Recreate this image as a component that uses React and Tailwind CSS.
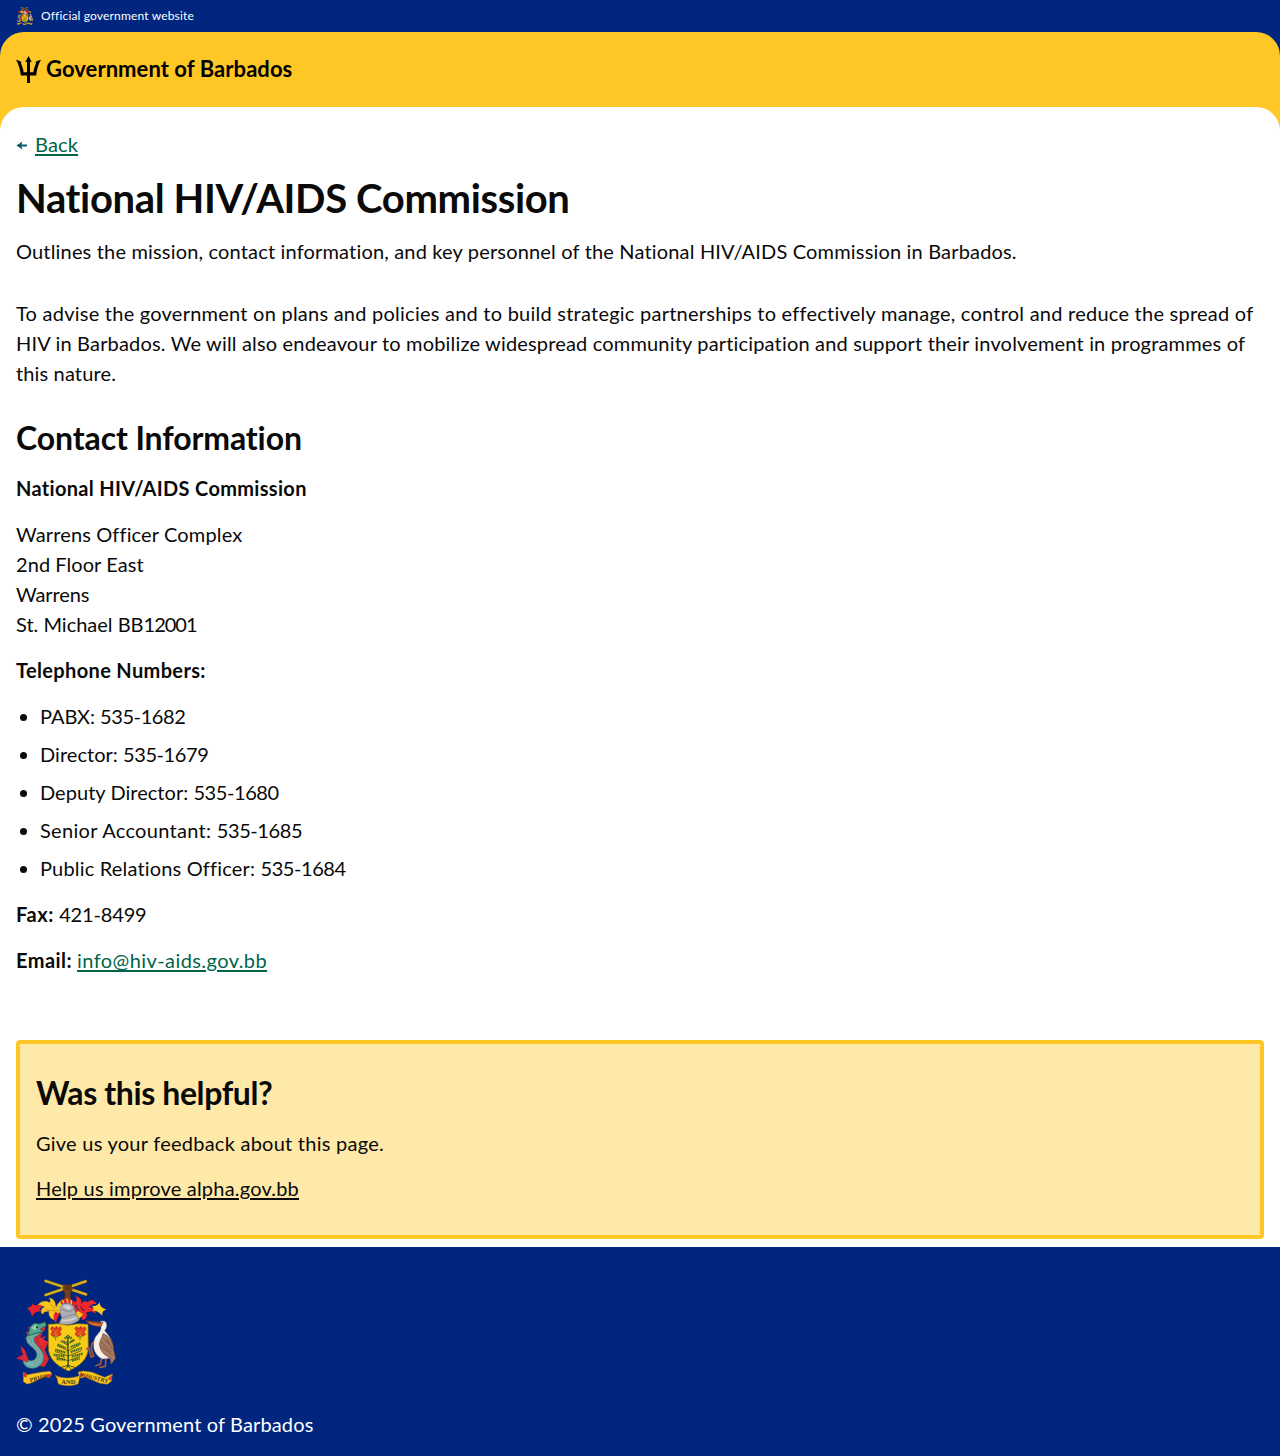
function Flower({ transform }) {
  return (
    <g transform={transform}>
      <path d="M137 199 V211 M130 203 L137 198 L144 203" stroke="#37551d" strokeWidth="2" fill="none" />
      <path d="M121 174 L128 170 L134 175 L139 169 L145 174 L152 170 L155 179 L149 185 L154 193 L146 199 L138 194 L129 200 L122 193 L127 185Z" fill="#dd3a1f" stroke="#9f281d" strokeWidth="1.5" />
      <path d="M128 178 L137 186 L148 177 M137 186 V195 M128 192 L147 190" stroke="#f0861f" strokeWidth="2" fill="none" />
    </g>
  );
}

function CoatOfArms({ className }) {
  return (
    <svg className={className} viewBox="18 27 300 321" preserveAspectRatio="none" aria-label="Coat of arms of Barbados">
      {/* crossed sugar canes */}
      <g stroke="#7d6416" strokeWidth="9" strokeLinecap="round">
        <path d="M107 33 L228 73" />
        <path d="M107 75 L227 34" />
      </g>
      <g stroke="#d9ac22" strokeWidth="7" strokeLinecap="round">
        <path d="M107 33 L228 73" />
        <path d="M107 75 L227 34" />
      </g>
      {/* arm and fist */}
      <path d="M160 48 L167 43 L184 45 L187 58 L181 70 L184 96 L161 97 L165 71 L160 62Z" fill="#70421f" stroke="#3c2413" strokeWidth="1.5" />
      <path d="M168 47 V60 M174 47 V60 M180 50 V62" stroke="#3b1e10" strokeWidth="1.5" />
      {/* gold mantling */}
      <path d="M160 90 C146 93 142 105 138 112 C137 96 130 82 116 85 C124 90 121 96 118 98 C106 88 88 96 82 107 C92 103 98 108 105 111 C91 114 91 127 98 133 C102 123 110 125 117 124 C114 139 124 148 134 150 C132 138 140 132 150 128Z" fill="#f8c51c" stroke="#c08a12" strokeWidth="1" />
      <path d="M135 116 C126 112 125 105 121 101 M145 121 C128 125 126 120 109 119" fill="none" stroke="#a97814" strokeWidth="2" />
      <path d="M88 104 C76 107 72 107 66 100 C67 109 61 113 50 114 C60 121 62 127 67 140 C72 127 82 124 95 124 C87 119 88 113 99 110Z" fill="#e6242b" />
      <path d="M137 125 C128 133 130 148 137 158 C142 146 145 141 148 133Z" fill="#e6242b" />
      {/* red mantling */}
      <path d="M188 101 C201 99 202 87 197 78 C210 81 218 91 212 104 C216 94 226 90 232 97 C242 85 257 91 259 103 C246 99 241 107 236 112 C250 110 260 120 256 131 C244 120 239 127 229 127 C234 141 225 150 217 151 C218 140 203 135 193 127Z" fill="#ef2929" />
      <path d="M214 108 C212 116 218 121 224 120 M199 105 C197 114 202 118 207 121" fill="none" stroke="#0b2272" strokeWidth="3" />
      <path d="M242 106 C253 110 262 109 269 97 C269 111 280 115 289 119 C279 121 276 126 277 137 C268 127 259 121 248 122 C253 116 250 110 242 106Z" fill="#f5c91e" />
      <path d="M203 122 L219 133 L207 147 L197 132Z" fill="#f5c91e" />
      {/* wreath and helmet */}
      <path d="M151 91 L173 83 L199 98 L194 107 L171 99 L153 103Z" fill="#d8272b" />
      <path d="M157 90 L162 100 M170 86 L174 98 M184 90 L184 103" stroke="#f7cf2e" strokeWidth="4" />
      <path d="M158 103 C176 96 192 102 193 118 L198 132 L208 150 C190 164 164 169 147 160 L155 144 L150 128 C149 115 151 107 158 103Z" fill="#aeafb3" stroke="#6a6a70" strokeWidth="1.5" />
      <path d="M153 117 L177 126 L193 117 M155 144 L178 136 L198 133" fill="none" stroke="#717178" strokeWidth="2" />
      <path d="M159 108 C169 103 180 106 185 114 L175 119Z" fill="#d4d5d8" />
      <path d="M155 151 C170 154 187 149 199 143" fill="none" stroke="#d1d1d5" strokeWidth="5" />
      {/* shield */}
      <path d="M115 163 L145 161 L173 166 L203 161 L234 163 L235 231 C235 267 210 288 175 303 C139 286 115 267 115 231Z" fill="#f8cb16" stroke="#8b6912" strokeWidth="2" />
      <Flower />
      <Flower transform="translate(73 0)" />
      {/* bearded fig tree */}
      <g fill="none" stroke="#34672a" strokeWidth="7" strokeDasharray="4 1.5">
        <path d="M164 206 L174 198 L185 206 M156 213 L170 219 M180 217 L194 209 M143 224 L167 234 M182 231 L211 220 M136 239 L167 248 M182 246 L216 234 M131 254 L165 259 M185 259 L219 251 M140 267 L165 269 M185 272 L209 265" />
      </g>
      <g fill="none" stroke="#2b3f18" strokeLinecap="round">
        <path d="M174 202 C172 230 176 256 174 290" strokeWidth="4" />
        <path d="M174 226 L151 213 M174 224 L190 210 M175 242 L142 227 M175 242 L208 225 M174 258 L136 245 M175 258 L214 242 M174 272 L138 260 M175 272 L209 259" strokeWidth="2" />
        <path d="M174 286 L154 292 M174 286 L195 292 M174 289 L165 298 M175 289 L184 298" strokeWidth="2.5" />
      </g>
      {/* dolphin */}
      <path d="M66 166 L54 173 L59 183 L48 186 L53 198 L44 207 L56 210 L82 240 L93 257 L91 274 L77 286 L104 291 L117 267 L104 240 L115 216 L91 203 L98 187 L87 177Z" fill="#d52835" />
      <path d="M72 180 C44 190 44 214 58 225 C74 239 84 246 79 260 C75 273 60 275 49 266 L41 255 C34 274 42 292 61 295 C84 299 104 278 101 257 C98 237 72 223 72 207 C72 198 86 198 92 190Z" fill="#69aca7" stroke="#245a64" strokeWidth="1.5" />
      <path d="M60 199 C53 211 62 217 72 226 C91 241 94 257 85 272 C78 284 61 287 51 278" fill="none" stroke="#a8d6bb" strokeWidth="5" strokeDasharray="2 3" />
      <path d="M58 196 C54 213 73 226 85 240 C96 254 88 276 70 283" fill="none" stroke="#b53b48" strokeWidth="3" strokeDasharray="3 4" />
      <path d="M53 197 L61 170 L73 159 L89 161 L105 155 L110 166 L91 178 L103 185 L79 190Z" fill="#4ba48d" stroke="#1c3c35" strokeWidth="2" />
      <path d="M90 178 L107 168 L103 184Z" fill="#d52835" />
      <path d="M63 173 L76 163 L84 169 L75 182Z" fill="#94cbae" />
      <circle cx="81" cy="172" r="3" fill="#1c2827" />
      <path d="M50 257 C47 237 36 231 32 227 C34 239 35 246 39 254 C31 258 23 261 19 266 C31 267 42 273 52 276 C57 270 55 262 50 257Z" fill="#dc2838" stroke="#85182e" strokeWidth="1" />
      <path d="M86 207 L108 197 L98 211 L114 215 L99 219 L109 233 L91 225Z" fill="#e72c35" />
      {/* pelican */}
      <path d="M255 213 C241 220 241 240 251 258 L243 261 L236 232 L230 238 M276 257 L272 282 L258 287 M288 262 L286 289 L270 292" fill="none" stroke="#a65b3d" strokeWidth="5" strokeLinecap="round" strokeLinejoin="round" />
      <path d="M272 154 C290 148 296 166 284 182 C294 194 309 208 308 233 L315 266 L304 282 L300 265 L278 267 C254 257 246 233 253 209 C257 194 273 187 273 174Z" fill="#f6f0e8" stroke="#806d68" strokeWidth="1.5" />
      <path d="M279 191 C297 196 312 218 311 239 L317 265 L303 282 L300 263 C284 257 269 242 269 222 C269 211 277 204 279 191Z" fill="#a8795e" stroke="#553832" strokeWidth="2" />
      <path d="M279 204 L300 225 M273 216 L303 245 M274 229 L308 256 M290 208 L307 237" stroke="#7a5546" strokeWidth="3" />
      <path d="M275 158 L229 152 C237 164 257 172 276 167Z" fill="#e1702c" stroke="#853a24" strokeWidth="2" />
      <path d="M231 154 L275 162" stroke="#69332b" strokeWidth="2" />
      <circle cx="278" cy="158" r="2" fill="#222" />
      {/* motto ribbon */}
      <path d="M40 306 L52 314 L96 306 L120 304 L126 312 L118 323 L106 320 C88 325 65 341 51 342 L40 335Z" fill="#f7c51e" stroke="#a3711a" strokeWidth="1.5" />
      <path d="M204 306 L221 303 L247 307 L284 322 L307 312 L304 334 L292 343 L270 340 L225 321 L211 324Z" fill="#f7c51e" stroke="#a3711a" strokeWidth="1.5" />
      <path d="M141 325 L136 316 C155 327 190 326 210 316 L205 341 C184 350 162 348 145 342Z" fill="#f7c51e" stroke="#a3711a" strokeWidth="1.5" />
      <path d="M40 306 L51 312 L49 323 L40 319Z M294 326 L307 314 L304 332Z M106 319 L118 323 L125 313 L115 312Z M211 323 L222 314 L213 308Z" fill="#dd3329" />
      <g fill="#4a3512" fontFamily="Liberation Serif, serif" fontSize="17" fontWeight="700">
        <text transform="translate(61 336) rotate(-15)" textLength="56" lengthAdjust="spacingAndGlyphs">PRIDE</text>
        <text x="154" y="341" textLength="42" lengthAdjust="spacingAndGlyphs">AND</text>
        <text transform="translate(208 319) rotate(13)" textLength="88" lengthAdjust="spacingAndGlyphs">INDUSTRY</text>
      </g>
    </svg>
  );
}

function Trident() {
  return (
    <svg className="h-[27px] w-[25px]" viewBox="0 0 25 27" fill="#000" aria-hidden="true">
      <path d="M12.5 0 L15.8 6.2 L14 5.8 V16.3 H17.3 C17.8 12.5 19 9.4 20.2 6.9 L19.4 6.2 C20.9 4.9 22.6 4.1 25 3.7 C22.3 8.2 20.8 13.5 20.2 19.4 H14 V27 H11 V19.4 H4.8 C4.2 13.5 2.7 8.2 0 3.7 C2.4 4.1 4.1 4.9 5.6 6.2 L4.8 6.9 C6 9.4 7.2 12.5 7.7 16.3 H11 V5.8 L9.2 6.2Z" />
    </svg>
  );
}

function BackArrow() {
  return (
    <svg className="mt-0.5 h-[9px] w-[11px]" viewBox="0 0 11 9" fill="#0e5f64" aria-hidden="true">
      <path d="M0.4 4.5 L6.4 0.5 L5.6 3.5 H11 V5.5 H5.6 L6.4 8.5Z" />
    </svg>
  );
}

const phones = [
  { label: "PABX: ", number: "535-1682", tracking: "tracking-[-0.05px]" },
  { label: "Director: ", number: "535-1679", tracking: "tracking-[0.04px]" },
  { label: "Deputy Director: ", number: "535-1680", tracking: "tracking-[0.04px]" },
  { label: "Senior Accountant: ", number: "535-1685", tracking: "tracking-[0.31px]" },
  { label: "Public Relations Officer: ", number: "535-1684", tracking: "tracking-[0.18px]" },
];

export default function App() {
  return (
    <div className="flex min-h-[1456px] flex-col whitespace-nowrap bg-white font-['Lato',sans-serif] text-xl leading-[30px] text-[#0a0a0a] [font-variant-ligatures:none]">
      <header className="bg-[#00267f]">
        <div className="flex h-8 items-center gap-2 px-4 text-white">
          <CoatOfArms className="h-[18px] w-[17px]" />
          <span className="text-xs tracking-[0.16px]">Official government website</span>
        </div>
        <div className="rounded-t-3xl bg-[#ffc726]">
          <div className="flex h-[75px] items-center gap-[5px] px-4 text-black">
            <Trident />
            <span className="pb-0.5 text-[22px] font-bold tracking-[0.06px]">Government of Barbados</span>
          </div>
          <div className="h-6 rounded-t-3xl bg-white" />
        </div>
      </header>

      <main className="flex flex-col px-4">
        <a href="#" className="-mt-0.5 flex w-fit items-center gap-2 text-[#00654a]">
          <BackArrow />
          <span className="tracking-[0.15px] underline decoration-2 underline-offset-2">Back</span>
        </a>
        <h1 className="mt-[14px] text-[40px] font-bold leading-[50px] tracking-[-0.36px]">National HIV/AIDS Commission</h1>
        <p className="mt-[13px] tracking-[0.17px]">
          Outlines the mission, contact information, and key personnel of the National HIV/AIDS Commission in Barbados.
        </p>
        <p className="mt-8">
          <span className="tracking-[0.24px]">To advise the government on plans and policies and to build strategic partnerships to effectively manage, control and reduce the spread of</span>
          <br />
          <span className="tracking-[0.17px]">HIV in Barbados. We will also endeavour to mobilize widespread community participation and support their involvement in programmes of</span>
          <br />
          <span className="tracking-[0.14px]">this nature.</span>
        </p>
        <h2 className="mt-[30px] text-[32px] font-bold leading-10 tracking-[-0.11px]">Contact Information</h2>
        <p className="mt-[15px] font-bold tracking-[0.32px]">National HIV/AIDS Commission</p>
        <p className="mt-4">
          <span className="tracking-[0.14px]">Warrens Officer Complex</span>
          <br />
          <span className="tracking-[0.06px]">2nd Floor East</span>
          <br />
          <span className="tracking-[-0.1px]">Warrens</span>
          <br />
          St. Michael BB<span className="tracking-[-1px]">12001</span>
        </p>
        <p className="mt-4 font-bold tracking-[0.35px]">Telephone Numbers:</p>
        <ul className="mt-4 flex list-disc flex-col gap-2 pl-6">
          {phones.map((p) => (
            <li key={p.label}>
              <span className={p.tracking}>{p.label}</span>
              <span className="tracking-[-0.42px]">{p.number}</span>
            </li>
          ))}
        </ul>
        <p className="mt-4 flex gap-[5px]">
          <b className="tracking-[0.6px]">Fax:</b>
          <span className="tracking-[-0.15px]">421-8499</span>
        </p>
        <p className="mt-4 flex gap-[5px]">
          <b className="tracking-[0.44px]">Email:</b>
          <a href="#" className="tracking-[0.42px] text-[#00654a] underline decoration-2 underline-offset-2">info@hiv-aids.gov.bb</a>
        </p>

        <section className="mt-[65px] flex h-[199px] flex-col rounded border-4 border-[#ffc726] bg-[#ffe9a8] px-4 pt-[29px]">
          <h2 className="text-[32px] font-bold leading-10 tracking-[-0.38px]">Was this helpful?</h2>
          <p className="mt-[15px] tracking-[0.25px]">Give us your feedback about this page.</p>
          <a href="#" className="mt-[15px] w-fit tracking-[0.2px] underline decoration-2 underline-offset-2">Help us improve alpha.gov.bb</a>
        </section>
      </main>

      <footer className="mt-2 flex grow flex-col bg-[#00267f] px-4 pt-8 text-white">
        <CoatOfArms className="h-[107px] w-[100px]" />
        <p className="mt-[23px] tracking-[0.14px]">© 2025 Government of Barbados</p>
      </footer>
    </div>
  );
}
